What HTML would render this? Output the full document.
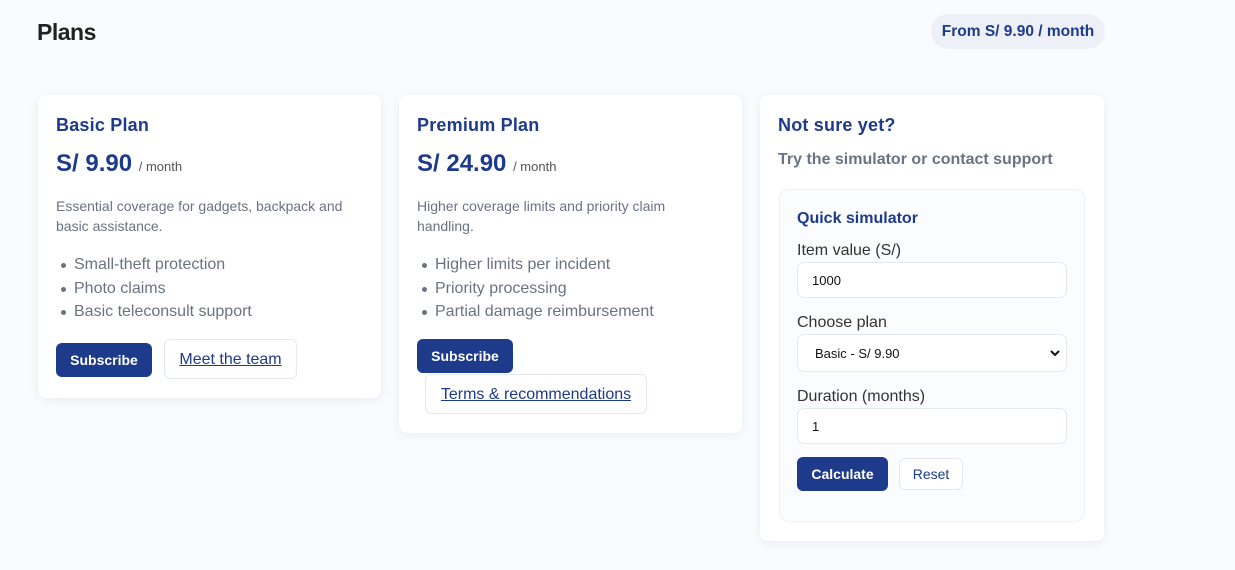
<!DOCTYPE html>
<html><head><meta charset="utf-8"><style>
*{box-sizing:border-box;margin:0;padding:0}
body{width:1235px;height:570px;background:#fafbfe;font-family:"Liberation Sans",sans-serif;position:relative;overflow:hidden}
.a{position:absolute;white-space:nowrap}
.card{position:absolute;background:#fff;border-radius:8px;box-shadow:0 2px 10px rgba(30,50,100,0.08)}
.h3{font-size:18px;font-weight:bold;color:#1e3a8a;letter-spacing:0.2px}
.price{font-size:24px;font-weight:bold;color:#1e3a8a}
.price span{font-size:13px;font-weight:normal;color:#555}
.desc{font-size:14px;color:#6b7280;line-height:20px}
.li{font-size:16px;color:#6b7280}
.li:before{content:"";position:absolute;left:-13px;top:7px;width:5px;height:5px;border-radius:50%;background:#6b7280}
.btn{position:absolute;background:#1e3a8a;color:#fff;font-weight:bold;font-size:14px;border-radius:6px;display:flex;align-items:center;justify-content:center}
.obtn{position:absolute;background:#fff;border:1px solid #e3e8f4;color:#1e3a8a;font-size:16px;border-radius:6px;display:flex;align-items:center;justify-content:center}
.obtn u{text-decoration:underline}
.lbl{font-size:16px;color:#333}
.inp{position:absolute;background:#fff;border:1px solid #e3e8f4;border-radius:7px;font-size:13px;color:#111;padding-left:14px;display:flex;align-items:center}
</style></head><body>
<div class="a" style="left:37px;top:19px;font-size:23px;font-weight:bold;color:#222;letter-spacing:-0.5px">Plans</div>
<div class="a" style="left:931px;top:14px;width:174px;height:35px;border-radius:18px;background:#eef0f7;color:#1e3a8a;font-weight:bold;font-size:15.5px;display:flex;align-items:center;justify-content:center;padding-top:1px">From S/ 9.90 / month</div>

<div class="card" style="left:38px;top:95px;width:343px;height:303px"></div>
<div class="a h3" style="left:56px;top:115px">Basic Plan</div>
<div class="a price" style="left:56px;top:150px">S/ 9.90 <span>/ month</span></div>
<div class="a desc" style="left:56px;top:196px">Essential coverage for gadgets, backpack and<br>basic assistance.</div>
<div class="a li" style="left:74px;top:256px">Small-theft protection</div>
<div class="a li" style="left:74px;top:280px">Photo claims</div>
<div class="a li" style="left:74px;top:303px">Basic teleconsult support</div>
<div class="btn" style="left:56px;top:343px;width:96px;height:34px">Subscribe</div>
<div class="obtn" style="left:164px;top:339px;width:133px;height:40px;padding-top:2px"><u>Meet the team</u></div>

<div class="card" style="left:399px;top:95px;width:343px;height:338px"></div>
<div class="a h3" style="left:417px;top:115px">Premium Plan</div>
<div class="a price" style="left:417px;top:150px">S/ 24.90 <span>/ month</span></div>
<div class="a desc" style="left:417px;top:196px">Higher coverage limits and priority claim<br>handling.</div>
<div class="a li" style="left:435px;top:256px">Higher limits per incident</div>
<div class="a li" style="left:435px;top:280px">Priority processing</div>
<div class="a li" style="left:435px;top:303px">Partial damage reimbursement</div>
<div class="btn" style="left:417px;top:339px;width:96px;height:34px">Subscribe</div>
<div class="obtn" style="left:425px;top:374px;width:222px;height:40px;padding-top:2px"><u>Terms &amp; recommendations</u></div>

<div class="card" style="left:760px;top:95px;width:344px;height:446px"></div>
<div class="a h3" style="left:778px;top:115px">Not sure yet?</div>
<div class="a" style="left:778px;top:151px;font-size:16px;font-weight:bold;color:#6b7280">Try the simulator or contact support</div>
<div class="a" style="left:779px;top:189px;width:306px;height:333px;background:#fbfcfe;border:1px solid #edf1f7;border-radius:10px"></div>
<div class="a" style="left:797px;top:210px;font-size:16px;font-weight:bold;color:#1e3a8a">Quick simulator</div>
<div class="a lbl" style="left:797px;top:242px">Item value (S/)</div>
<div class="inp" style="left:797px;top:262px;width:270px;height:36px">1000</div>
<div class="a lbl" style="left:797px;top:314px">Choose plan</div>
<div class="inp" style="left:797px;top:334px;width:270px;height:38px;padding-left:17px">Basic - S/ 9.90<svg style="position:absolute;right:6px;top:15px" width="10" height="7" viewBox="0 0 10 7"><path d="M1 1l4 4 4-4" stroke="#111" stroke-width="2" fill="none"/></svg></div>
<div class="a lbl" style="left:797px;top:388px">Duration (months)</div>
<div class="inp" style="left:797px;top:408px;width:270px;height:36px">1</div>
<div class="btn" style="left:797px;top:457px;width:91px;height:34px">Calculate</div>
<div class="obtn" style="left:899px;top:458px;width:64px;height:32px;font-size:14px">Reset</div>
</body></html>
